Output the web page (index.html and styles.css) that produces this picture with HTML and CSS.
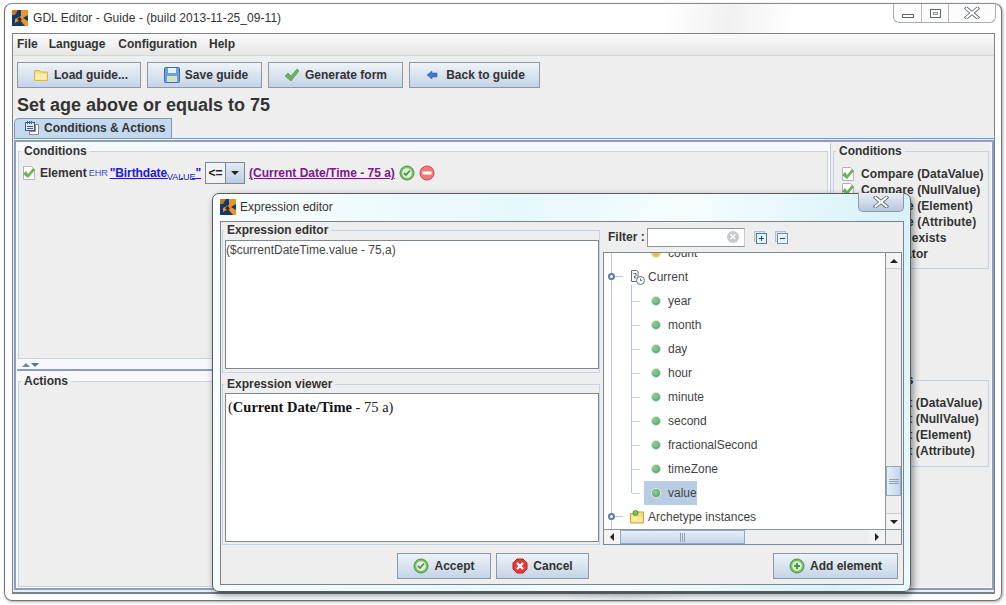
FILE: index.html
```html
<!DOCTYPE html>
<html lang="en">
<head>
<meta charset="utf-8">
<title>GDL Editor</title>
<link rel="stylesheet" href="styles.css">
</head>
<body>
<svg class="defs" width="0" height="0" aria-hidden="true">
  <defs>
    <symbol id="logo" viewBox="0 0 16 16"><rect width="16" height="16" fill="#123a6b"/><path d="M9 0h7v5l-5 3 5 3v5h-3L8 10l-5 3V9l6-3z" fill="#e8952a"/><path d="M0 0h6L3 5H0z" fill="#c97a1e"/><path d="M5 9l3-2 2 3-3 1z" fill="#3a2a12"/></symbol>
    <symbol id="folder" viewBox="0 0 16 16"><path d="M1.500 3.500h5l1 1.500h7v8.500h-13z" fill="#f6dc86" stroke="#d8b452"/><path d="M2.500 7h11v5.500h-11z" fill="#fbeeb6"/></symbol>
    <symbol id="save" viewBox="0 0 16 16"><rect x=".5" y=".5" width="15" height="15" rx="1" fill="#6f9fd8" stroke="#3f6fae"/><rect x="4" y="1" width="8" height="5" fill="#e8f0fa"/><rect x="3" y="9" width="10" height="6" fill="#cfe6b8"/></symbol>
    <symbol id="check" viewBox="0 0 16 16"><path d="M1 9l3-3 3 3 6-7 2 2-8 10z" fill="#6fb05a" stroke="#4d8f3f" stroke-width=".6"/></symbol>
    <symbol id="back" viewBox="0 0 12 12"><path d="M1 6l5-4v2h5v4H6v2z" fill="#3f78c8" stroke="#2a5aa0" stroke-width=".5"/></symbol>
    <symbol id="doc" viewBox="0 0 16 16"><path d="M2.500 1.500h8l3 3v10h-11z" fill="#fff" stroke="#b4b4b4"/><path d="M2 9l3-3 2 3 5-6 2 2-7 8z" fill="#6fb05a"/></symbol>
    <symbol id="ok" viewBox="0 0 16 16"><circle cx="8" cy="8" r="7" fill="#7cc06a" stroke="#4c9440"/><circle cx="8" cy="8" r="4.800" fill="#e3f3dc"/><path d="M5 8l2 2 4-4.500" fill="none" stroke="#4c9440" stroke-width="1.800"/></symbol>
    <symbol id="minus" viewBox="0 0 16 16"><circle cx="8" cy="8" r="7" fill="#ee7a7a" stroke="#c84a4a"/><rect x="3.500" y="6.500" width="9" height="3" fill="#fff"/></symbol>
    <symbol id="cancel" viewBox="0 0 16 16"><path d="M5 1h6l4 4v6l-4 4H5l-4-4V5z" fill="#e23b3b" stroke="#b82020"/><path d="M5 5l6 6M11 5l-6 6" stroke="#fff" stroke-width="2.400"/></symbol>
    <symbol id="add" viewBox="0 0 16 16"><circle cx="8" cy="8" r="7" fill="#7cc06a" stroke="#4c9440"/><circle cx="8" cy="8" r="4.800" fill="#dff1d6"/><path d="M8 5v6M5 8h6" stroke="#4c9440" stroke-width="2"/></symbol>
    <symbol id="tabicon" viewBox="0 0 16 16"><rect x="1.500" y="2.500" width="9" height="8" fill="#dfe8f4" stroke="#3f5f8f"/><path d="M3.500 1v3M5.500 1v3M7.500 1v3M3 6.500h6M3 8.500h6" stroke="#3f5f8f"/><path d="M11.500 4.500h3v10h-9v-3h6z" fill="#fff" stroke="#8a8a8a"/></symbol>
    <symbol id="current" viewBox="0 0 16 16"><path d="M2.500 1.500h5l1.500 1v10H2.500z" fill="#fff" stroke="#6a6f76"/><path d="M4.500 4.500h2.500v2.500H5.500v2h2" fill="none" stroke="#6a6f76"/><circle cx="11.500" cy="11.500" r="4" fill="#fff" stroke="#5a6f8a"/><path d="M11.500 9.500v2h1.500" fill="none" stroke="#5a6f8a"/></symbol>
    <symbol id="archfolder" viewBox="0 0 16 16"><path d="M1.500 4.500h4l1-1.500h8v11h-13z" fill="#f6d873" stroke="#c9a544"/><path d="M2.500 7.500h11v5.500h-11z" fill="#fbe9a4"/><circle cx="6.500" cy="4" r="2.500" fill="#7cc06a" stroke="#4c9440"/></symbol>
    <symbol id="closex" viewBox="0 0 16 12"><path d="M2.500 1.500l11 9M13.500 1.500l-11 9" stroke="#59636e" stroke-width="3.600" stroke-linecap="square"/><path d="M2.500 1.500l11 9M13.500 1.500l-11 9" stroke="#fff" stroke-width="2" stroke-linecap="square"/></symbol>
    <symbol id="plusbox" viewBox="0 0 13 13"><rect x=".5" y=".5" width="10" height="10" fill="#dbe6f1" stroke="#a8c0d8"/><rect x="2.500" y="2.500" width="10" height="10" fill="#e9f1f8" stroke="#4f7ba5"/><path d="M5 7.500h5M7.500 5v5" stroke="#1f4a73"/></symbol>
    <symbol id="minusbox" viewBox="0 0 13 13"><rect x=".5" y=".5" width="10" height="10" fill="#dbe6f1" stroke="#a8c0d8"/><rect x="2.500" y="2.500" width="10" height="10" fill="#e9f1f8" stroke="#6d8fb0"/><path d="M5 7.500h5" stroke="#1f4a73"/></symbol>
  </defs>
</svg>

<main class="window">
  <header class="titlebar">
    <svg class="logo"><use href="#logo"/></svg>
    <span class="title">GDL Editor - Guide - (build 2013-11-25_09-11)</span>
    <div class="caption">
      <span class="cap cap-min"><i class="glyph-min"></i></span>
      <span class="cap cap-max"><i class="glyph-max"></i></span>
      <span class="cap cap-close"><svg class="closex"><use href="#closex"/></svg></span>
    </div>
  </header>

  <div class="app">
    <nav class="menubar">
      <span>File</span><span>Language</span><span>Configuration</span><span>Help</span>
    </nav>
    <div class="toolbar">
      <button class="btn w-load"><svg class="ico"><use href="#folder"/></svg>Load guide...</button>
      <button class="btn w-save"><svg class="ico"><use href="#save"/></svg>Save guide</button>
      <button class="btn w-gen"><svg class="ico"><use href="#check"/></svg>Generate form</button>
      <button class="btn w-back"><svg class="ico-s"><use href="#back"/></svg>Back to guide</button>
    </div>
    <h1 class="heading">Set age above or equals to 75</h1>
    <div class="tabs">
      <div class="tab"><svg class="ico"><use href="#tabicon"/></svg>Conditions &amp; Actions</div>
    </div>
    <section class="tabpanel">
      <div class="split-left">
        <fieldset class="group cond-group">
          <legend>Conditions</legend>
          <div class="rule">
            <svg class="ico"><use href="#doc"/></svg>
            <span class="rule-el">Element</span>
            <span class="ehr">EHR</span>
            <a class="link-blue">"Birthdate<sub>VALUE</sub>"</a>
            <span class="combo"><span class="combo-val">&lt;=</span><span class="combo-arrow"></span></span>
            <a class="link-purple">(Current Date/Time - 75 a)</a>
            <svg class="ico"><use href="#ok"/></svg>
            <svg class="ico"><use href="#minus"/></svg>
          </div>
        </fieldset>
        <div class="divider"><span class="tri-up"></span><span class="tri-down"></span></div>
        <fieldset class="group act-group"><legend>Actions</legend></fieldset>
      </div>
      <aside class="split-right">
        <div class="side-top">
          <fieldset class="group side-group">
            <legend>Conditions</legend>
            <div class="side-row"><svg class="ico"><use href="#doc"/></svg>Compare (DataValue)</div>
            <div class="side-row"><svg class="ico"><use href="#doc"/></svg>Compare (NullValue)</div>
            <div class="side-row"><svg class="ico"><use href="#doc"/></svg>Compare (Element)</div>
            <div class="side-row"><svg class="ico"><use href="#doc"/></svg>Compare (Attribute)</div>
            <div class="side-row"><svg class="ico"><use href="#doc"/></svg>Element exists</div>
            <div class="side-row"><svg class="ico"><use href="#doc"/></svg>Or operator</div>
          </fieldset>
        </div>
        <div class="side-bottom">
          <fieldset class="group side-group">
            <legend>Rule actions</legend>
            <div class="side-row"><svg class="ico"><use href="#doc"/></svg>Element (DataValue)</div>
            <div class="side-row"><svg class="ico"><use href="#doc"/></svg>Element (NullValue)</div>
            <div class="side-row"><svg class="ico"><use href="#doc"/></svg>Element (Element)</div>
            <div class="side-row"><svg class="ico"><use href="#doc"/></svg>Element (Attribute)</div>
          </fieldset>
        </div>
      </aside>
    </section>
  </div>

  <div class="dialog">
    <header class="dlg-title">
      <svg class="logo"><use href="#logo"/></svg>
      <span>Expression editor</span>
      <span class="dlg-close"><svg class="closex"><use href="#closex"/></svg></span>
    </header>
    <div class="dlg-body">
      <div class="dlg-main">
        <div class="dlg-left">
          <fieldset class="group ex-group ex-editor">
            <legend>Expression editor</legend>
            <div class="ex-area ex-edit-area">($currentDateTime.value - 75,a)</div>
          </fieldset>
          <fieldset class="group ex-group ex-viewer">
            <legend>Expression viewer</legend>
            <div class="ex-area ex-serif">(<b>Current Date/Time</b> - 75 a)</div>
          </fieldset>
        </div>
        <div class="dlg-right">
          <div class="filter">
            <label class="filter-label">Filter :</label>
            <span class="filter-input"><span class="clear">&#x2715;</span></span>
            <svg class="tree-btn"><use href="#plusbox"/></svg>
            <svg class="tree-btn"><use href="#minusbox"/></svg>
          </div>
          <div class="tree-box">
            <div class="tree-view">
              <div class="tree">
                <div class="row child-l"><i class="dot yellow"></i>count</div>
                <div class="row top"><i class="handle"></i><svg class="ico"><use href="#current"/></svg>Current</div>
                <div class="children">
                  <div class="row"><i class="tick"></i><i class="dot"></i>year</div>
                  <div class="row"><i class="tick"></i><i class="dot"></i>month</div>
                  <div class="row"><i class="tick"></i><i class="dot"></i>day</div>
                  <div class="row"><i class="tick"></i><i class="dot"></i>hour</div>
                  <div class="row"><i class="tick"></i><i class="dot"></i>minute</div>
                  <div class="row"><i class="tick"></i><i class="dot"></i>second</div>
                  <div class="row"><i class="tick"></i><i class="dot"></i>fractionalSecond</div>
                  <div class="row"><i class="tick"></i><i class="dot"></i>timeZone</div>
                  <div class="row selected"><i class="tick"></i><span class="sel"><i class="dot"></i>value</span></div>
                </div>
                <div class="row top"><i class="handle"></i><svg class="ico"><use href="#archfolder"/></svg>Archetype instances</div>
              </div>
            </div>
            <div class="vscroll">
              <span class="sb-btn"><i class="arr-up"></i></span>
              <span class="sb-track"><span class="vthumb"><i class="grip-h"></i></span></span>
              <span class="sb-btn"><i class="arr-down"></i></span>
            </div>
            <div class="hscroll">
              <span class="sb-btn-h"><i class="arr-left"></i></span>
              <span class="hthumb"><i class="grip-v"></i></span>
              <span class="sb-fill"></span>
              <span class="sb-btn-h"><i class="arr-right"></i></span>
            </div>
            <div class="corner"></div>
          </div>
        </div>
      </div>
      <div class="dlg-foot">
        <div class="foot-center">
          <button class="btn w-accept"><svg class="ico"><use href="#ok"/></svg>Accept</button>
          <button class="btn w-cancel"><svg class="ico"><use href="#cancel"/></svg>Cancel</button>
        </div>
        <button class="btn w-add"><svg class="ico"><use href="#add"/></svg>Add element</button>
      </div>
    </div>
  </div>
</main>
</body>
</html>
```
FILE: styles.css
```css
* { box-sizing: border-box; }
html, body { margin: 0; height: 100%; }
body {
  background: #fff;
  font: bold 12px "Liberation Sans", Arial, sans-serif;
  color: #333;
  overflow: hidden;
}
.defs { position: absolute; }

.window {
  position: relative;
  width: 998px;
  height: 598px;
  margin: 3px 0 0 4px;
  padding: 0 6px 6px 7px;
  display: flex;
  flex-direction: column;
  background: linear-gradient(100deg, #fff 60%, #f1f1f1 66%, #fff 72%);
  border: 1px solid #6f7377;
  border-top-color: #8a8a8a;
  border-radius: 8px;
  box-shadow: 1px 1px 3px rgba(0,0,0,.35);
}

.titlebar {
  height: 29px;
  padding-bottom: 2px;
  display: flex;
  align-items: center;
  gap: 5px;
  font-weight: normal;
  color: #333;
  flex: none;
}
.logo { width: 16px; height: 16px; flex: none; }
.title { font-size: 12px; letter-spacing: .05px; }
.caption {
  margin-left: auto;
  align-self: flex-start;
  display: flex;
  height: 19px;
  border: 1px solid #a9adb1;
  border-top: 0;
  border-radius: 0 0 6px 6px;
  background: #fcfcfc;
  margin-right: -1px;
}
.cap { display: flex; align-items: center; justify-content: center; height: 100%; border-right: 1px solid #b5b9bd; }
.cap-min { width: 28px; }
.cap-max { width: 27px; }
.cap-close { width: 46px; border: 0; }
.closex { width: 16px; height: 12px; display: block; }
.glyph-min { width: 12px; height: 4px; margin-top: 6px; border: 1px solid #5d6670; }
.glyph-max { width: 11px; height: 9px; border: 1px solid #5d6670; box-shadow: inset 0 0 0 2px #fff, inset 0 0 0 3px #8b939b; }

.app {
  flex: 1;
  min-height: 0;
  display: flex;
  flex-direction: column;
  background: #eeeeee;
  border: 1px solid #7b8288;
  border-bottom-width: 2px;
}
.menubar {
  height: 22px;
  flex: none;
  display: flex;
  align-items: center;
  gap: 12px;
  padding: 0 4px 2px;
  background: linear-gradient(#fafafa, #e6e6e6);
  border-bottom: 1px solid #d6d6d6;
}
.menubar span:nth-child(2) { margin-left: -1px; }
.menubar span:nth-child(3) { margin-left: 1px; }
.toolbar { display: flex; gap: 6px; padding: 6px 4px 0; flex: none; }

.btn {
  height: 26px;
  padding: 0;
  display: flex;
  align-items: center;
  justify-content: center;
  gap: 5px;
  font: inherit;
  color: #333;
  background: linear-gradient(#eef3f8 0%, #dbe5f0 45%, #c4d4e6 100%);
  border: 1px solid #8d99a6;
  flex: none;
}
.ico { width: 16px; height: 16px; flex: none; }
.ico-s { width: 12px; height: 12px; flex: none; margin-right: 3px; }
.w-load { width: 124px; padding-left: 3px; }
.w-save { width: 115px; padding-left: 3px; }
.w-gen { width: 135px; }
.w-back { width: 131px; padding-left: 2px; }

.heading { margin: 4px 0 0 4px; height: 26px; font-size: 18px; line-height: 26px; flex: none; color: #333; }

.tabs { display: flex; margin-left: 1px; height: 21px; flex: none; border-bottom: 1px solid #7f9ab8; }
.tab {
  width: 158px;
  display: flex;
  align-items: center;
  gap: 4px;
  padding: 0 0 1px 9px;
  background: #c4d8ee;
  border: 1px solid #7f9ab8;
  border-bottom: 0;
  border-radius: 5px 0 0 0;
}

.tabpanel {
  flex: 1;
  min-height: 0;
  display: flex;
  margin: 1px 0 2px 1px;
  padding: 1px;
  border: 2px solid #8ba0bc;
  background: #f6f8fb;
}
.split-left {
  width: 814px;
  flex: none;
  display: flex;
  flex-direction: column;
  padding-right: 2px;
  border-right: 1px solid #b9cbe0;
}
.split-right {
  flex: 1;
  min-width: 0;
  display: flex;
  flex-direction: column;
  background: #eeeeee;
}

.group {
  margin: 0;
  min-width: 0;
  padding: 0;
  border: 1px solid #c6d3e3;
  background: #eeeeee;
}
.group legend { padding: 0 3px; margin-left: 2px; font-size: 12px; line-height: 14px; }

.cond-group { height: 215px; margin: 1px 0 0 1px; padding: 4px 0 0 2px; }
.cond-group legend { margin-left: 0; }
.rule { display: flex; align-items: center; gap: 4px; height: 22px; font-size: 12px; }
.rule-el { margin-left: -1px; }
.ehr { color: #3a4fc4; font-size: 9px; font-weight: normal; margin-left: -2px; margin-right: -2px; }
.link-blue { color: #1a1ad0; text-decoration: underline; font-size: 12px; letter-spacing: -.1px; }
.link-blue sub { font-size: 9px; font-weight: normal; vertical-align: sub; line-height: 0; }
.link-purple { color: #7a1a8a; text-decoration: underline; }
.combo { display: flex; width: 40px; height: 22px; border: 1px solid #7a8794; margin-left: 0; flex: none; }
.combo-val { width: 20px; display: flex; align-items: center; justify-content: center; background: #f2f2f2; border-right: 1px solid #7a8794; color: #222; }
.combo-arrow { flex: 1; position: relative; background: linear-gradient(#e2eaf3, #bccde0); }
.combo-arrow::after {
  content: "";
  position: absolute;
  left: 5px;
  top: 8px;
  border: 4.5px solid transparent;
  border-top-color: #222;
  border-bottom-width: 0;
}

.divider {
  height: 9px;
  margin: 3px 0 0;
  display: flex;
  gap: 1px;
  align-items: center;
  padding: 0 0 1px 5px;
  background: radial-gradient(circle, #aab2bc .5px, transparent .6px) 0 0 / 2px 2px;
  border-bottom: 2px solid #8ba0bc;
}
.tri-up, .tri-down { width: 0; height: 0; border: 4px solid transparent; border-top: 0; border-bottom: 4px solid #6e84a0; }
.tri-down { border-bottom: 0; border-top: 4px solid #5d708c; }

.act-group { flex: 1; min-height: 0; margin: 3px 0 0 1px; }

.side-top { height: 222px; padding: 1px 2px 0 2px; flex: none; }
.side-bottom { flex: 1; padding: 8px 2px 0 2px; }
.side-group { padding: 8px 0 6px 0; }
.side-bottom .side-group { padding-bottom: 7px; }
.side-bottom legend { margin-left: 5px; }
.side-bottom .side-row { gap: 9px; }
.side-row { display: flex; align-items: center; gap: 5px; height: 16px; padding-left: 6px; white-space: nowrap; letter-spacing: .1px; }

.dialog {
  position: absolute;
  left: 207px;
  top: 189px;
  width: 699px;
  height: 399px;
  display: flex;
  flex-direction: column;
  padding: 0 6px 6px 7px;
  border: 1px solid #555c62;
  border-radius: 7px;
  background: linear-gradient(100deg, #fafeff 0%, #e6f8fb 40%, #f6fdff 62%, #d6f2f8 90%, #eefafd 100%);
  box-shadow: 2px 3px 7px rgba(0,0,0,.45);
}
.dlg-title {
  height: 27px;
  padding-bottom: 1px;
  flex: none;
  display: flex;
  align-items: center;
  gap: 4px;
  font-weight: normal;
  position: relative;
}
.dlg-close {
  position: absolute;
  right: 0;
  top: -1px;
  width: 46px;
  height: 19px;
  display: flex;
  align-items: center;
  justify-content: center;
  border: 1px solid #8e9aa8;
  border-top: 0;
  border-radius: 0 0 5px 5px;
  background: linear-gradient(#e8eef6, #b7c6dc);
}
.dlg-body {
  flex: 1;
  min-height: 0;
  display: flex;
  flex-direction: column;
  background: #eeeeee;
  border: 1px solid #7b8288;
}
.dlg-main { flex: 1; min-height: 0; display: flex; }
.dlg-left { width: 379px; flex: none; padding: 1px 0 0 1px; display: flex; flex-direction: column; gap: 4px; }
.ex-group { flex: none; }
.ex-group legend { margin-left: 1px; }
.ex-editor { height: 150px; padding-top: 3px; }
.ex-viewer { height: 168px; padding-top: 2px; }
.ex-area {
  margin-left: 2px;
  background: #fff;
  border: 1px solid #7f878f;
  font-weight: normal;
  font-size: 12px;
  padding: 2px 0;
  color: #444;
}
.ex-edit-area { height: 129px; padding-left: 0; }
.ex-serif { height: 149px; font: 14.5px "Liberation Serif", "Times New Roman", serif; color: #222; padding: 5px 2px; }
.ex-serif b { color: #111; }

.dlg-right { flex: 1; min-width: 0; display: flex; flex-direction: column; padding: 0 1px 0 3px; }
.filter { height: 30px; flex: none; display: flex; align-items: center; padding-left: 5px; }
.filter-label { width: 39px; flex: none; }
.filter-input {
  width: 98px;
  height: 19px;
  background: #fff;
  border: 1px solid #8d959d;
  border-right-color: #c8ccd0;
  display: flex;
  align-items: center;
  justify-content: flex-end;
  padding-right: 5px;
}
.clear {
  width: 12px; height: 12px;
  border-radius: 50%;
  background: #c9c9c9;
  color: #fff;
  font-size: 9px;
  line-height: 12px;
  text-align: center;
}
.tree-btn { width: 13px; height: 13px; margin-left: 9px; flex: none; }
.tree-btn + .tree-btn { margin-left: 8px; }

.tree-box {
  height: 293px;
  flex: none;
  display: grid;
  grid-template-columns: 1fr 16px;
  grid-template-rows: 1fr 15px;
  border: 1px solid #7f878f;
  background: #fff;
}
.tree-view { overflow: hidden; min-height: 0; position: relative; }
.tree { margin-top: -12px; font-weight: normal; color: #444; position: relative; }
.tree::before {
  content: "";
  position: absolute;
  left: 7px;
  top: 0;
  bottom: -20px;
  width: 1px;
  background: #b8c6d8;
}
.row { height: 24px; display: flex; align-items: center; white-space: nowrap; }
.row.top { padding-left: 3px; gap: 3px; position: relative; }
.row.top .ico { margin-left: 22px; }
.handle {
  position: absolute;
  left: 4px; top: 8px;
  width: 7px; height: 7px;
  border-radius: 50%;
  border: 2px solid #5c7cb0;
  background: #fff;
}
.handle::after {
  content: "";
  position: absolute;
  left: 5px; top: 1px;
  width: 8px; height: 1px;
  background: #b8c6d8;
}
.child-l { padding-left: 48px; gap: 8px; }
.children { margin-left: 27px; position: relative; }
.children::before {
  content: "";
  position: absolute;
  left: 0; top: -4px; bottom: 12px;
  width: 1px;
  background: #b8c6d8;
}
.children .row { padding-left: 21px; gap: 8px; position: relative; }
.tick { position: absolute; left: 1px; top: 12px; width: 8px; height: 1px; background: #c6d2e0; }
.dot {
  width: 8px; height: 8px; flex: none;
  border-radius: 50%;
  background: radial-gradient(circle at 40% 35%, #8fcf9a, #4f9a5e);
  box-shadow: 0 0 0 1px #d6e8da;
}
.dot.yellow { background: #d8c848; box-shadow: 0 0 0 1px #efe9b8; }
.children .row.selected { padding-left: 13px; }
.sel { height: 24px; padding: 0 0 0 8px; display: flex; align-items: center; gap: 8px; background: #b8cde4; }

.vscroll { display: flex; flex-direction: column; border-left: 1px solid #8d959d; background: #eeeeee; }
.sb-btn { height: 16px; flex: none; display: flex; align-items: center; justify-content: center; background: #f3f3f3; border-bottom: 1px solid #c8ccd0; }
.sb-btn:last-child { border-top: 1px solid #c8ccd0; border-bottom: 0; }
.sb-track { flex: 1; display: flex; flex-direction: column; justify-content: flex-end; padding-bottom: 17px; }
.vthumb { height: 30px; display: flex; align-items: center; justify-content: center; background: linear-gradient(90deg, #e6eef7, #c4d6ea); border: 1px solid #8fa9c8; }
.grip-h { width: 10px; height: 5px; border-top: 1px solid #8fa3bb; border-bottom: 1px solid #8fa3bb; background: linear-gradient(#8fa3bb, #8fa3bb) center / 100% 1px no-repeat; }
.arr-up, .arr-down, .arr-left, .arr-right { width: 0; height: 0; border: 4px solid transparent; }
.arr-up { border-top: 0; border-bottom: 4px solid #222; }
.arr-down { border-bottom: 0; border-top: 4px solid #222; }
.arr-left { border-left: 0; border-right: 4px solid #222; }
.arr-right { border-right: 0; border-left: 4px solid #222; }

.hscroll { display: flex; border-top: 1px solid #8d959d; background: #eeeeee; }
.sb-btn-h { width: 16px; flex: none; display: flex; align-items: center; justify-content: center; background: #f3f3f3; }
.hthumb { width: 125px; flex: none; display: flex; align-items: center; justify-content: center; background: linear-gradient(#e6eef7, #c4d6ea); border: 1px solid #8fa9c8; }
.grip-v { width: 5px; height: 9px; border-left: 1px solid #8fa3bb; border-right: 1px solid #8fa3bb; background: linear-gradient(#8fa3bb, #8fa3bb) center / 1px 100% no-repeat; }
.sb-fill { flex: 1; }
.corner { background: #eeeeee; border-top: 1px solid #8d959d; border-left: 1px solid #8d959d; }

.dlg-foot { height: 37px; flex: none; display: flex; align-items: center; padding: 0 5px 0 176px; }
.foot-center { display: flex; gap: 5px; }
.w-accept { width: 94px; }
.w-cancel { width: 93px; }
.w-add { width: 125px; margin-left: auto; }
```
